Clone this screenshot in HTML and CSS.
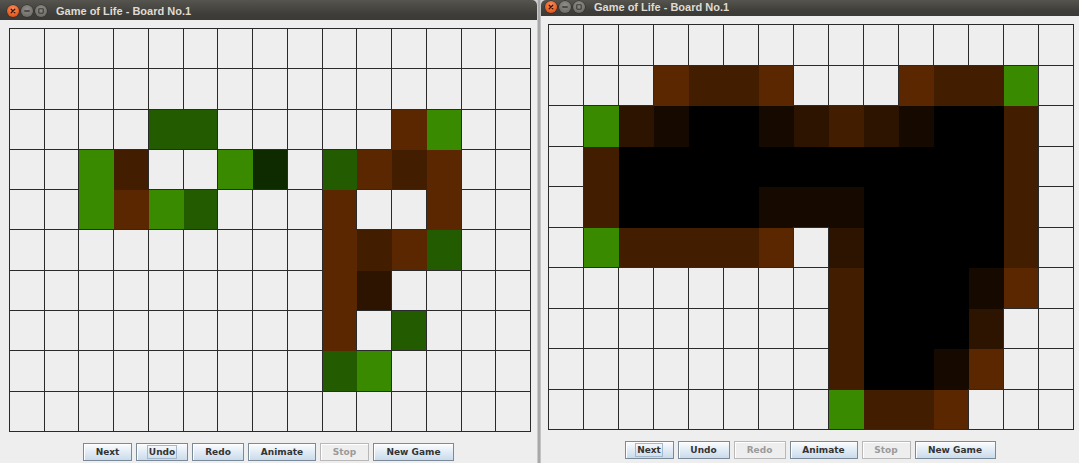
FILE: index.html
```html
<!DOCTYPE html>
<html lang="en">
<head>
<meta charset="utf-8">
<title>Game of Life - Board No.1</title>
<link rel="stylesheet" href="styles.css">
</head>
<body>
<div class="desk">
  <section class="win win-left">
    <header class="titlebar">
      <span class="wbtn close"><svg viewBox="0 0 12 12" width="12" height="12"><path d="M4.2 4.2l3.6 3.6M7.8 4.2l-3.6 3.6" stroke="#3a1607" stroke-width="1.3" stroke-linecap="round"/></svg></span>
      <span class="wbtn min"><svg viewBox="0 0 12 12" width="12" height="12"><path d="M3.8 6h4.4" stroke="#3a3935" stroke-width="1.4" stroke-linecap="round"/></svg></span>
      <span class="wbtn max"><svg viewBox="0 0 12 12" width="12" height="12"><rect x="3.8" y="3.8" width="4.4" height="4.4" rx="0.6" fill="none" stroke="#3a3935" stroke-width="1.1"/></svg></span>
      <span class="title">Game of Life - Board No.1</span>
    </header>
    <div class="content">
      <div class="board" id="board-left"></div>
      <div class="buttons">
        <button class="btn w-next">Next</button>
        <button class="btn w-undo"><span class="focus">Undo</span></button>
        <button class="btn w-redo">Redo</button>
        <button class="btn w-animate">Animate</button>
        <button class="btn w-stop" disabled>Stop</button>
        <button class="btn w-new">New Game</button>
      </div>
    </div>
  </section>
  <div class="sep"></div>
  <section class="win win-right">
    <header class="titlebar">
      <span class="wbtn close"><svg viewBox="0 0 12 12" width="12" height="12"><path d="M4.2 4.2l3.6 3.6M7.8 4.2l-3.6 3.6" stroke="#3a1607" stroke-width="1.3" stroke-linecap="round"/></svg></span>
      <span class="wbtn min"><svg viewBox="0 0 12 12" width="12" height="12"><path d="M3.8 6h4.4" stroke="#3a3935" stroke-width="1.4" stroke-linecap="round"/></svg></span>
      <span class="wbtn max"><svg viewBox="0 0 12 12" width="12" height="12"><rect x="3.8" y="3.8" width="4.4" height="4.4" rx="0.6" fill="none" stroke="#3a3935" stroke-width="1.1"/></svg></span>
      <span class="title">Game of Life - Board No.1</span>
    </header>
    <div class="content">
      <div class="board" id="board-right"></div>
      <div class="buttons">
        <button class="btn w-next"><span class="focus">Next</span></button>
        <button class="btn w-undo">Undo</button>
        <button class="btn w-redo" disabled>Redo</button>
        <button class="btn w-animate">Animate</button>
        <button class="btn w-stop" disabled>Stop</button>
        <button class="btn w-new">New Game</button>
      </div>
    </div>
  </section>
</div>
<script src="app.js"></script>
</body>
</html>
```
FILE: styles.css
```css
html, body {
  margin: 0;
  padding: 0;
}
body {
  width: 1079px;
  height: 463px;
  overflow: hidden;
  background: #d4d4d4;
  font-family: "DejaVu Sans", sans-serif;
}
.desk {
  display: flex;
  height: 463px;
}
.win {
  display: flex;
  flex-direction: column;
  background: #eeeeee;
  height: 463px;
}
.win-left {
  width: 537px;
  border-radius: 0 5px 0 0;
}
.win-right {
  width: 538px;
  border-radius: 5px 0 0 0;
}
.sep {
  width: 4px;
  background: linear-gradient(to right, #dcdcdc, #a8a8a8 35%, #a8a8a8 70%, #d6d6d6);
}
.titlebar {
  display: flex;
  align-items: center;
  background: linear-gradient(#55544e, #3e3d39 70%, #3b3a36);
  color: #dfdbd2;
  box-sizing: border-box;
}
.win-left .titlebar {
  height: 20px;
  padding: 1px 0 0 7px;
  border-radius: 0 5px 0 0;
}
.win-right .titlebar {
  height: 16px;
  padding: 0 0 2px 4px;
  border-radius: 5px 0 0 0;
}
.wbtn {
  width: 12px;
  height: 12px;
  border-radius: 50%;
  display: flex;
  margin-right: 2px;
  box-sizing: border-box;
}
.wbtn svg {
  display: block;
}
.close {
  background: radial-gradient(circle at 50% 35%, #f9925f, #ec5f25 60%, #c9450f);
  box-shadow: 0 0 0 0.5px #2c2a26;
}
.min, .max {
  background: radial-gradient(circle at 50% 35%, #8f8e88, #75746e 60%, #5f5e59);
  box-shadow: 0 0 0 0.5px #2c2a26;
}
.title {
  margin-left: 7px;
  font-family: "Liberation Sans", Arial, sans-serif;
  font-weight: bold;
  font-size: 11px;
  white-space: nowrap;
}
.content {
  display: flex;
  flex-direction: column;
  padding-top: 8px;
}
.win-left .content {
  padding-left: 9px;
}
.win-right .content {
  padding-left: 7px;
}
.board {
  display: grid;
  grid-template-columns: repeat(15, 1fr);
  grid-template-rows: repeat(10, 1fr);
  gap: 1px;
  background: #2a2a2a;
  border: 1px solid #2a2a2a;
  box-sizing: border-box;
}
.win-left .board {
  width: 522px;
  height: 404px;
}
.win-right .board {
  width: 526px;
  height: 406px;
}
.cell {
  background: #eeeeee;
  color: #eeeeee;
}
.cell.green { background: #3a8a00; color: #3a8a00; }
.cell.moss { background: #235b00; color: #235b00; }
.cell.forest { background: #0e2b00; color: #0e2b00; }
.cell.rust { background: #5b2700; color: #5b2700; }
.cell.brown { background: #421d00; color: #421d00; }
.cell.umber { background: #2d1400; color: #2d1400; }
.cell.soot { background: #160900; color: #160900; }
.cell.black { background: #000000; color: #000000; }
.cell.jr { box-shadow: 1px 0 0 0; }
.cell.jd { box-shadow: 0 1px 0 0; }
.cell.jr.jd { box-shadow: 1px 0 0 0, 0 1px 0 0; }
.cell.jr.jd.jc { box-shadow: 1px 0 0 0, 0 1px 0 0, 1px 1px 0 0; }
.buttons {
  display: flex;
  justify-content: center;
  gap: 4px;
  margin-top: 11px;
}
.win-left .buttons {
  margin-left: -9px;
}
.win-right .buttons {
  margin-left: -7px;
}
.btn {
  height: 18px;
  box-sizing: border-box;
  margin: 0;
  padding: 0;
  font: bold 9px "DejaVu Sans", sans-serif;
  color: #333333;
  border: 1px solid #7a8a99;
  border-radius: 0;
  background: linear-gradient(#fbfdff, #e4edf6 45%, #cadbec);
  box-shadow: inset 1px 1px 0 #ffffff;
  display: flex;
  align-items: center;
  justify-content: center;
}
.btn:disabled {
  color: #9a9a9a;
  border-color: #b8b8b8;
  background: #eeeeee;
  box-shadow: inset 1px 1px 0 #ffffff;
}
.focus {
  border: 1px solid #a3b8cc;
  padding: 0 1px;
  line-height: 12px;
}
.w-next { width: 49px; }
.w-undo { width: 52px; }
.w-redo { width: 52px; }
.w-animate { width: 68px; }
.w-stop { width: 49px; }
.w-new { width: 81px; }
```
FILE: app.js
```js
var BOARDS = {
  "board-left": [
    "...............",
    "...............",
    "....gg.....BG..",
    "..Gb..Gv.gBbB..",
    "..GBGg...B..B..",
    ".........BbBg..",
    ".........Bd....",
    ".........B.g...",
    ".........gG....",
    "..............."
  ],
  "board-right": [
    "...............",
    "...BbbB...BbbG.",
    ".GdkXXkdbdkXXb.",
    ".bXXXXXXXXXXXb.",
    ".bXXXXkkkXXXXb.",
    ".GbbbbB.dXXXXb.",
    "........bXXXkB.",
    "........bXXXd..",
    "........bXXkB..",
    "........GbbB..."
  ]
};
var NAMES = { G: "green", g: "moss", v: "forest", B: "rust", b: "brown", d: "umber", k: "soot", X: "black" };

Object.keys(BOARDS).forEach(function (id) {
  var rows = BOARDS[id];
  var el = document.getElementById(id);
  var filled = function (r, c) {
    return r < rows.length && c < rows[r].length && rows[r][c] !== ".";
  };
  rows.forEach(function (row, r) {
    for (var c = 0; c < row.length; c++) {
      var d = document.createElement("div");
      d.className = "cell";
      var ch = row[c];
      if (ch !== ".") {
        d.classList.add(NAMES[ch]);
        var right = filled(r, c + 1);
        var down = filled(r + 1, c);
        if (right) d.classList.add("jr");
        if (down) d.classList.add("jd");
        if (right && down && filled(r + 1, c + 1)) d.classList.add("jc");
      }
      el.appendChild(d);
    }
  });
});
```
